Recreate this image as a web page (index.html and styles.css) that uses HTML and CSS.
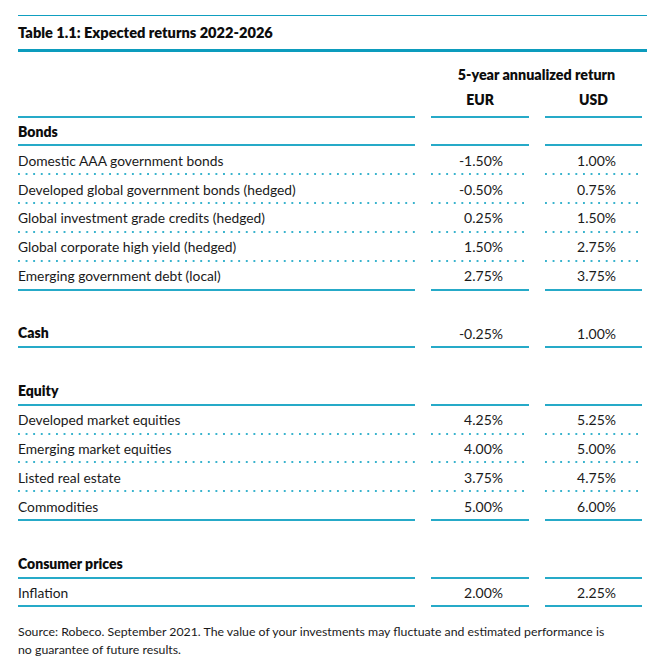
FILE: index.html
```html
<!DOCTYPE html>
<html>
<head>
<meta charset="utf-8">
<link rel="stylesheet" href="styles.css">
</head>
<body>
<div class="page">
  <div class="title">Table 1.1: Expected returns 2022-2026</div>
  <div class="table">
    <div class="head-span">5-year annualized return</div>
    <div class="hcell"></div><div class="hcell cur">EUR</div><div class="hcell cur">USD</div>

    <div class="cell sec">Bonds</div><div class="cell"></div><div class="cell"></div>
    <div class="cell dot">Domestic AAA government bonds</div><div class="cell dot num">-1.50%</div><div class="cell dot num">1.00%</div>
    <div class="cell dot">Developed global government bonds (hedged)</div><div class="cell dot num">-0.50%</div><div class="cell dot num">0.75%</div>
    <div class="cell dot">Global investment grade credits (hedged)</div><div class="cell dot num">0.25%</div><div class="cell dot num">1.50%</div>
    <div class="cell dot">Global corporate high yield (hedged)</div><div class="cell dot num">1.50%</div><div class="cell dot num">2.75%</div>
    <div class="cell">Emerging government debt (local)</div><div class="cell num">2.75%</div><div class="cell num">3.75%</div>

    <div class="spacer"></div>
    <div class="cell sec">Cash</div><div class="cell num">-0.25%</div><div class="cell num">1.00%</div>

    <div class="spacer"></div>
    <div class="cell sec">Equity</div><div class="cell"></div><div class="cell"></div>
    <div class="cell dot">Developed market equities</div><div class="cell dot num">4.25%</div><div class="cell dot num">5.25%</div>
    <div class="cell dot">Emerging market equities</div><div class="cell dot num">4.00%</div><div class="cell dot num">5.00%</div>
    <div class="cell dot">Listed real estate</div><div class="cell dot num">3.75%</div><div class="cell dot num">4.75%</div>
    <div class="cell">Commodities</div><div class="cell num">5.00%</div><div class="cell num">6.00%</div>

    <div class="spacer"></div>
    <div class="cell sec">Consumer prices</div><div class="cell"></div><div class="cell"></div>
    <div class="cell">Inflation</div><div class="cell num">2.00%</div><div class="cell num">2.25%</div>
  </div>
  <p class="source">Source: Robeco. September 2021. The value of your investments may fluctuate and estimated performance is no guarantee of future results.</p>
</div>
</body>
</html>
```

FILE: styles.css
```css
html, body {
  margin: 0;
  padding: 0;
  background: #ffffff;
}

body {
  font-family: Lato, "Open Sans", sans-serif;
  color: #1a1a1a;
}

.page {
  padding: 15px 14px 0 18px;
  width: 629px;
}

.title {
  border-top: 1px solid #0f9fc0;
  border-bottom: 3px solid #0c9cbd;
  height: 33px;
  box-sizing: content-box;
  display: flex;
  align-items: center;
  font-weight: 800;
  font-size: 14.6px;
  color: #0d0d0d;
}

.table {
  display: grid;
  grid-template-columns: 397px 98px 97px;
  column-gap: 16px;
  grid-auto-rows: 28.82px;
  padding-top: 8px;
  width: 624px;
}

.head-span {
  grid-column: 2 / 4;
  text-align: center;
  font-weight: 800;
  font-size: 14.3px;
  color: #0d0d0d;
  display: flex;
  align-items: center;
  justify-content: center;
  padding-top: 1px;
}

.hcell {
  border-bottom: 2px solid #26aac8;
  box-sizing: border-box;
  display: flex;
  align-items: center;
  justify-content: center;
  font-weight: 800;
  font-size: 14px;
  color: #0d0d0d;
  padding-bottom: 5px;
}

.cell {
  box-sizing: border-box;
  border-bottom: 2px solid #26aac8;
  display: flex;
  align-items: center;
  font-size: 13.8px;
  padding-top: 1px;
}

.cell.dot {
  border-bottom: none;
  background-image: linear-gradient(to right, #39b3cd 0, #39b3cd 2px, transparent 2px);
  background-size: 7.6px 2px;
  background-repeat: repeat-x;
  background-position: 0 100%;
  padding-bottom: 2px;
}

.cell.sec {
  font-weight: 800;
  font-size: 14px;
  color: #0d0d0d;
  padding-top: 0;
}

.cell.num {
  justify-content: flex-end;
  padding-right: 26px;
  font-size: 14px;
}

.spacer {
  grid-column: 1 / 4;
}

.source {
  margin: 16px 0 0 0;
  font-size: 12.3px;
  line-height: 18px;
  width: 592px;
}
```
